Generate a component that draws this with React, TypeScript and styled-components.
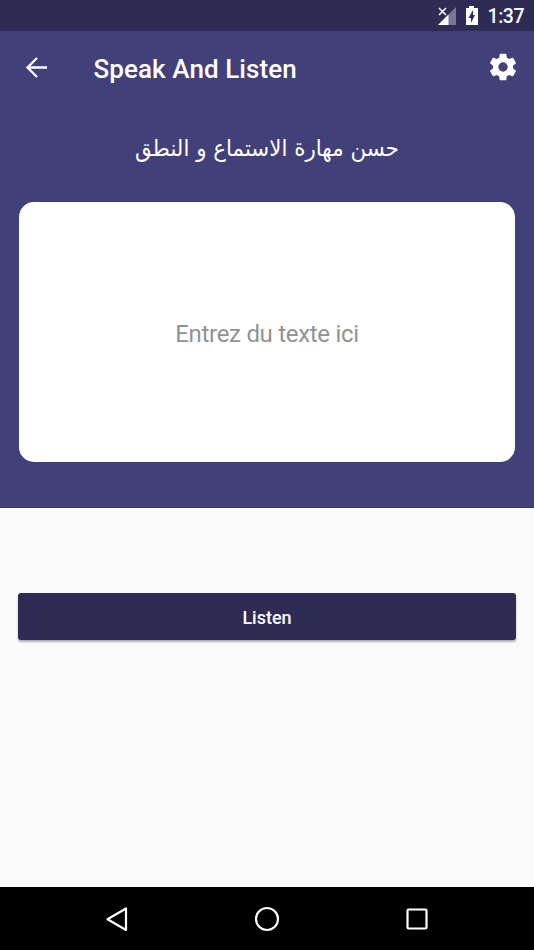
import React from "react";
import styled, { createGlobalStyle } from "styled-components";

const GlobalStyle = createGlobalStyle`
  * { box-sizing: border-box; }
  body { margin: 0; background: #fafafa; }
  button { border: 0; padding: 0; background: none; color: inherit; font: inherit; }
  svg { display: block; flex: none; }
`;

const Screen = styled.div`
  display: flex;
  flex-direction: column;
  width: 534px;
  height: 950px;
  overflow: hidden;
  background: #fafafa;
  color: #fff;
  font-family: Roboto, sans-serif;
`;

const StatusBar = styled.div`
  display: flex;
  align-items: center;
  justify-content: flex-end;
  height: 31px;
  padding-right: 10px;
  background: #2e2b54;
`;

const Clock = styled.span`
  margin-left: 4px;
  padding-top: 3px;
  font-size: 19.5px;
  font-weight: 500;
  line-height: 24px;
  letter-spacing: -0.5px;
`;

const Hero = styled.section`
  display: flex;
  flex-direction: column;
  height: 477px;
  padding: 0 19px;
  background: #424078;
  border-bottom: 1px solid #34316b;
`;

const AppBar = styled.header`
  display: flex;
  align-items: center;
  height: 72px;
  margin: 0 -19px;
  padding: 0 13px 0 18px;
`;

const IconButton = styled.button`
  display: grid;
  place-items: center;
  width: 36px;
  height: 36px;
`;

const Title = styled.h1`
  flex: 1;
  margin: 3px 0 0 39.5px;
  font-size: 26px;
  font-weight: 500;
  line-height: 32px;
  letter-spacing: 0.08px;
  white-space: nowrap;
`;

const Tagline = styled.p`
  display: flex;
  align-items: center;
  justify-content: center;
  height: 40px;
  margin: 25px 0 0;
  font-family: "DejaVu Sans", sans-serif;
  font-size: 23px;
  line-height: 40px;
  white-space: nowrap;
  transform: scaleX(0.93);
`;

const TextInput = styled.textarea`
  display: block;
  height: 260px;
  width: 496px;
  margin-top: 34px;
  padding: 117px 20px 0;
  border: 0;
  border-radius: 15px;
  background: #fff;
  resize: none;
  outline: 0;
  text-align: center;
  font: 400 24px/30px Roboto, sans-serif;
  letter-spacing: -0.3px;
  &::placeholder { color: #929292; opacity: 1; }
`;

const Content = styled.main`
  flex: 1;
  padding: 85px 18px 0;
`;

const ListenButton = styled.button`
  width: 498px;
  height: 47px;
  padding-top: 2px;
  border-radius: 3px;
  background: #2e2b54;
  box-shadow: 0 2px 2px rgba(0, 0, 0, 0.3);
  color: #fff;
  font: 500 18px/24px Roboto, sans-serif;
`;

const NavBar = styled.nav`
  display: flex;
  align-items: center;
  justify-content: space-between;
  height: 63px;
  padding: 0 99px;
  background: #000;
`;

export default function App() {
  return (
    <Screen>
      <GlobalStyle />
      <StatusBar>
        <svg width="48" height="24" viewBox="0 0 48 24">
          <path d="M20 3V21H2Z" fill="#777594" />
          <path d="M12.5 10.5V21H2Z" fill="#fff" />
          <path d="M3 4L10 11M10 4L3 11" stroke="#fff" strokeWidth="1.5" />
          <path d="M30 4H33V2H38V4H42V21H30Z" fill="#fff" />
          <path d="M37 6V11H39L35 19V14H32.5Z" fill="#2e2b54" />
        </svg>
        <Clock>1:37</Clock>
      </StatusBar>
      <Hero>
        <AppBar>
          <IconButton aria-label="Back">
            <svg width="24" height="24" viewBox="0 0 24 24" fill="none" stroke="#fff" strokeWidth="2.3">
              <path d="M23 12.5H4M13 3L3.5 12.5L13 22" />
            </svg>
          </IconButton>
          <Title>Speak And Listen</Title>
          <IconButton aria-label="Settings">
            <svg width="32" height="32" viewBox="0 0 24 24" fill="#fff">
              <path d="M19.43 12.98c.04-.32.07-.64.07-.98s-.03-.66-.07-.98l2.11-1.65c.19-.15.24-.42.12-.64l-2-3.46c-.12-.22-.39-.3-.61-.22l-2.49 1c-.52-.4-1.08-.73-1.69-.98l-.38-2.65A.49.49 0 0 0 14 2h-4c-.25 0-.46.18-.49.42l-.38 2.65c-.61.25-1.17.59-1.69.98l-2.49-1c-.23-.09-.49 0-.61.22l-2 3.46c-.13.22-.07.49.12.64l2.11 1.65c-.04.32-.07.65-.07.98s.03.66.07.98l-2.11 1.65c-.19.15-.24.42-.12.64l2 3.46c.12.22.39.3.61.22l2.49-1c.52.4 1.08.73 1.69.98l.38 2.65c.03.24.24.42.49.42h4c.25 0 .46-.18.49-.42l.38-2.65c.61-.25 1.17-.59 1.69-.98l2.49 1c.23.09.49 0 .61-.22l2-3.46c.12-.22.07-.49-.12-.64l-2.11-1.65zM12 15.5A3.5 3.5 0 1 1 12 8.5a3.5 3.5 0 0 1 0 7z" />
            </svg>
          </IconButton>
        </AppBar>
        <Tagline lang="ar" dir="rtl">حسن مهارة الاستماع و النطق</Tagline>
        <TextInput placeholder="Entrez du texte ici" />
      </Hero>
      <Content>
        <ListenButton>Listen</ListenButton>
      </Content>
      <NavBar>
        <IconButton aria-label="System back">
          <svg width="36" height="36" viewBox="0 0 36 36" fill="none" stroke="#fff" strokeWidth="2.2" strokeLinejoin="round">
            <path d="M27 7.5V29L8.5 18.2Z" />
          </svg>
        </IconButton>
        <IconButton aria-label="Home">
          <svg width="36" height="36" viewBox="0 0 36 36" fill="none" stroke="#fff" strokeWidth="2.2">
            <circle cx="18" cy="18" r="11" />
          </svg>
        </IconButton>
        <IconButton aria-label="Recent apps">
          <svg width="36" height="36" viewBox="0 0 36 36" fill="none" stroke="#fff" strokeWidth="2.2">
            <rect x="8.5" y="8.5" width="19" height="19" rx="1" />
          </svg>
        </IconButton>
      </NavBar>
    </Screen>
  );
}
